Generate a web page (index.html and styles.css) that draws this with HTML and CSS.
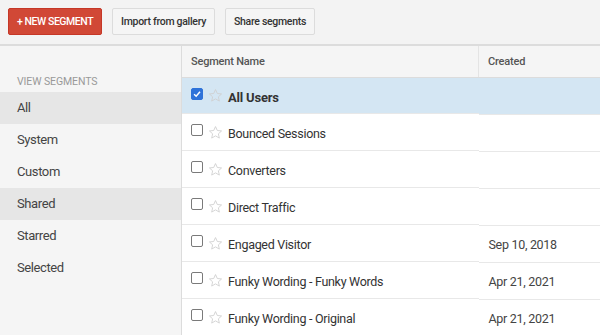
FILE: index.html
```html
<!DOCTYPE html>
<html lang="en">
<head>
  <meta charset="UTF-8" />
  <title>Segments</title>
  <link rel="stylesheet" href="styles.css">
</head>
<body>
  <div class="toolbar">
    <button class="btn btn-red">+ NEW SEGMENT</button>
    <button class="btn">Import from gallery</button>
    <button class="btn">Share segments</button>
  </div>

  <div class="main">
    <div class="sidebar">
      <div class="side-title">VIEW SEGMENTS</div>
      <div class="side-item active">All</div>
      <div class="side-item">System</div>
      <div class="side-item">Custom</div>
      <div class="side-item active">Shared</div>
      <div class="side-item">Starred</div>
      <div class="side-item">Selected</div>
    </div>

    <table class="segments">
      <thead>
        <tr><th class="col-name">Segment Name</th><th class="col-date">Created</th></tr>
      </thead>
      <tbody>
        <tr class="selected">
          <td class="col-name"><span class="box checked"><svg viewBox="0 0 12 12"><path d="M2.5 6.2 L5 8.6 L9.6 3.2" fill="none" stroke="#fff" stroke-width="1.8"/></svg></span><svg class="star" viewBox="0 0 24 24"><path d="M12 2.5l2.9 6.3 6.8.7-5.1 4.6 1.5 6.8L12 17.4l-6.1 3.5 1.5-6.8-5.1-4.6 6.8-.7z"/></svg><b>All Users</b></td>
          <td class="col-date"></td>
        </tr>
        <tr>
          <td class="col-name"><span class="box"></span><svg class="star" viewBox="0 0 24 24"><path d="M12 2.5l2.9 6.3 6.8.7-5.1 4.6 1.5 6.8L12 17.4l-6.1 3.5 1.5-6.8-5.1-4.6 6.8-.7z"/></svg>Bounced Sessions</td>
          <td class="col-date"></td>
        </tr>
        <tr>
          <td class="col-name"><span class="box"></span><svg class="star" viewBox="0 0 24 24"><path d="M12 2.5l2.9 6.3 6.8.7-5.1 4.6 1.5 6.8L12 17.4l-6.1 3.5 1.5-6.8-5.1-4.6 6.8-.7z"/></svg>Converters</td>
          <td class="col-date"></td>
        </tr>
        <tr>
          <td class="col-name"><span class="box"></span><svg class="star" viewBox="0 0 24 24"><path d="M12 2.5l2.9 6.3 6.8.7-5.1 4.6 1.5 6.8L12 17.4l-6.1 3.5 1.5-6.8-5.1-4.6 6.8-.7z"/></svg>Direct Traffic</td>
          <td class="col-date"></td>
        </tr>
        <tr>
          <td class="col-name"><span class="box"></span><svg class="star" viewBox="0 0 24 24"><path d="M12 2.5l2.9 6.3 6.8.7-5.1 4.6 1.5 6.8L12 17.4l-6.1 3.5 1.5-6.8-5.1-4.6 6.8-.7z"/></svg>Engaged Visitor</td>
          <td class="col-date">Sep 10, 2018</td>
        </tr>
        <tr>
          <td class="col-name"><span class="box"></span><svg class="star" viewBox="0 0 24 24"><path d="M12 2.5l2.9 6.3 6.8.7-5.1 4.6 1.5 6.8L12 17.4l-6.1 3.5 1.5-6.8-5.1-4.6 6.8-.7z"/></svg>Funky Wording - Funky Words</td>
          <td class="col-date">Apr 21, 2021</td>
        </tr>
        <tr>
          <td class="col-name"><span class="box"></span><svg class="star" viewBox="0 0 24 24"><path d="M12 2.5l2.9 6.3 6.8.7-5.1 4.6 1.5 6.8L12 17.4l-6.1 3.5 1.5-6.8-5.1-4.6 6.8-.7z"/></svg>Funky Wording - Original</td>
          <td class="col-date">Apr 21, 2021</td>
        </tr>
      </tbody>
    </table>
  </div>
</body>
</html>
```

FILE: styles.css
```css
body {
  margin: 0;
  font-family: Roboto, "Liberation Sans", sans-serif;
  background: #f5f5f5;
  color: #333;
  overflow: hidden;
}
.toolbar {
  height: 46px;
  display: flex;
  align-items: flex-start;
  gap: 10px;
  padding: 8px 0 0 8px;
  box-sizing: border-box;
  border-bottom: 2px solid #dcdcdc;
  background: #f3f3f3;
}
.btn {
  height: 27px;
  padding: 0 8px;
  border: 1px solid #dcdcdc;
  border-radius: 2px;
  background: #f5f5f5;
  color: #333;
  font-family: inherit;
  font-size: 10.5px;
  font-weight: 500;
  letter-spacing: -0.3px;
}
.btn-red {
  background: #d14836;
  border-color: #c53727;
  color: #fff;
  letter-spacing: -0.45px;
}
.main {
  display: flex;
  height: 300px;
}
.sidebar {
  width: 181px;
  flex: none;
  background: #f5f5f5;
  border-right: 1px solid #dcdcdc;
  padding-top: 29px;
}
.side-title {
  padding-left: 17px;
  font-size: 10.5px;
  color: #999;
  height: 17px;
  letter-spacing: -0.1px;
}
.side-item {
  height: 32px;
  line-height: 32px;
  padding-left: 17px;
  font-size: 13px;
  letter-spacing: -0.4px;
  color: #444;
}
.side-item.active {
  background: #e6e6e6;
}
.segments {
  flex: 1;
  border-collapse: collapse;
  background: #fff;
  align-self: flex-start;
  font-size: 12.5px;
  letter-spacing: -0.3px;
  color: #333;
}
.segments th {
  height: 31px;
  text-align: left;
  background: #f5f5f5;
  font-size: 11px;
  font-weight: 500;
  letter-spacing: -0.2px;
  color: #555;
  border-bottom: 1px solid #dcdcdc;
  padding: 0 10px 0 9px;
}
.segments th.col-date {
  border-left: 1px solid #e4e4e4;
}
.segments td {
  height: 36px;
  padding: 0 0 0 9px;
  border-bottom: 1px solid #e8e8e8;
}
.segments .col-date {
  width: 102px;
}
.segments td.col-name {
  display: flex;
  align-items: center;
  height: 36px;
  padding-top: 3px;
  box-sizing: border-box;
}
.segments td.col-date {
  color: #444;
  padding-left: 10px;
  padding-top: 2px;
  height: 34px;
  line-height: 34px;
}
.selected td {
  background: #d4e6f3;
  font-size: 13px;
}
.box {
  width: 12px;
  height: 12px;
  border: 1px solid #7a7a7a;
  border-radius: 2px;
  background: #fff;
  margin-right: 5px;
  margin-bottom: 7px;
  flex: none;
  box-sizing: border-box;
}
.box.checked {
  background: #2f73d9;
  border-color: #2f73d9;
}
.box svg {
  display: block;
  width: 10px;
  height: 10px;
}
.star {
  width: 15px;
  height: 15px;
  fill: none;
  stroke: #cfcfcf;
  stroke-width: 1.4;
  margin-right: 5px;
  margin-bottom: 3px;
  flex: none;
}
.col-name b {
  letter-spacing: -0.2px;
}
```
